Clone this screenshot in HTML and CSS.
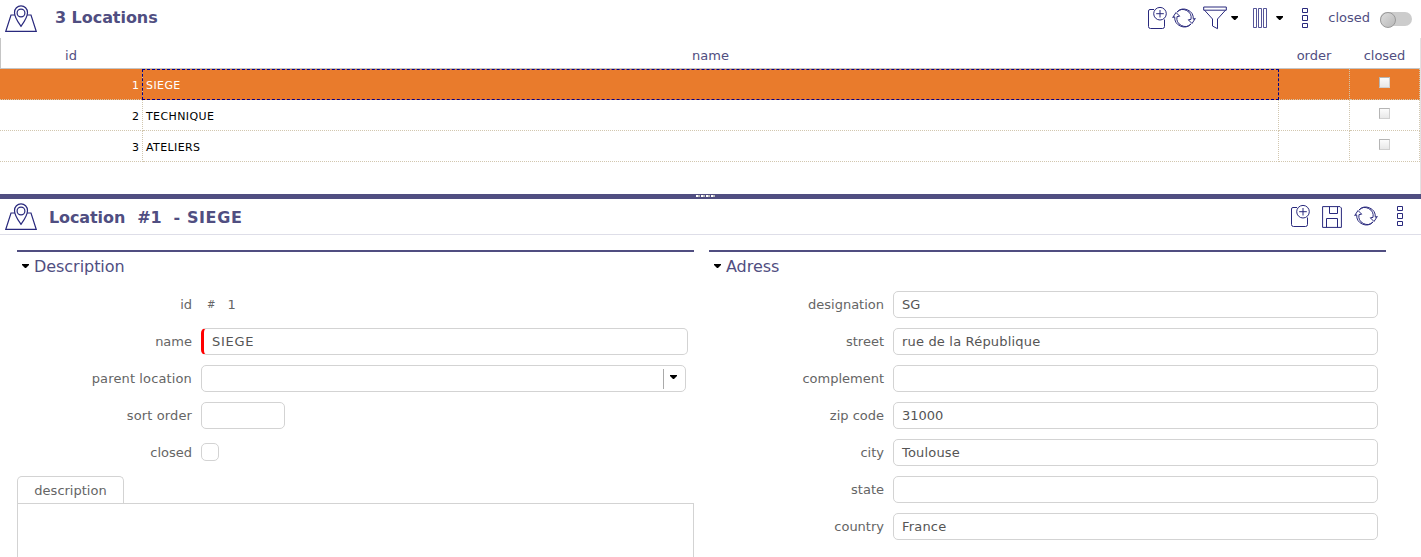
FILE: index.html
```html
<!DOCTYPE html>
<html lang="en">
<head>
<meta charset="utf-8">
<title>Locations</title>
<link rel="stylesheet" href="styles.css">
</head>
<body>
<svg class="defs" width="0" height="0" aria-hidden="true">
  <symbol id="map" viewBox="0 0 32 28"><path d="M10 10H6L.8 26.3H31.2L26 10H22"/><path d="M16 21.300C13 17 9.500 12.500 9.500 7.500A6.500 6.700 0 0 1 22.500 7.500C22.500 12.500 19 17 16 21.300Z"/><circle cx="16" cy="8" r="3.900"/></symbol>
  <symbol id="add" viewBox="0 0 20 24"><path d="M7 3.500H3Q1.500 3.500 1.500 5V20.500Q1.500 22.500 3.500 22.500H15.500Q17.500 22.500 17.500 20.500V13.500"/><circle cx="13" cy="7.700" r="6.300"/><path d="M13 4V11.500M9.200 7.700H16.800"/></symbol>
  <symbol id="refresh" viewBox="0 0 24 22"><path d="M5 5A9.500 9.500 0 0 1 21.300 12.200L23.300 11.500L20 16.500L16.300 12.800L19 12.400A8.300 8.300 0 0 0 5 5Z"/><path d="M19 17A9.500 9.500 0 0 1 2.700 9.800L.7 10.500L4 5.500L7.700 9.200L5 9.600A8.300 8.300 0 0 0 19 17Z"/></symbol>
  <symbol id="filter" viewBox="0 0 24 24"><path d="M.7 1H23.300V4.200H.7ZM1.500 4.200L9.500 13V20L14.500 22.700V13L22.500 4.200"/></symbol>
  <symbol id="columns" viewBox="0 0 16 22"><path d="M1.500 1.500H4.500V20.500H1.500ZM6.500 1.500H9.500V20.500H6.500ZM11.500 1.500H14.500V20.500H11.500Z"/></symbol>
  <symbol id="dots" viewBox="0 0 6 21"><path d="M.5 .5H5.500V4.500H.5ZM.5 7.500H5.500V12.500H.5ZM.5 15.500H5.500V19.500H.5Z"/></symbol>
  <symbol id="save" viewBox="0 0 20 22"><path d="M.6 .6H18L19.400 2V21.400H.6ZM7.500 .6V7.500H15.500V.6M4.500 21.400V12.500H15.500V21.400"/></symbol>
</svg>

<section class="list">
  <header class="bar">
    <svg class="icon map"><use href="#map"/></svg>
    <h1 class="list-title">3 Locations</h1>
    <div class="tools">
      <svg class="icon add"><use href="#add"/></svg>
      <svg class="icon refresh"><use href="#refresh"/></svg>
      <svg class="icon filter"><use href="#filter"/></svg>
      <i class="caret"></i>
      <svg class="icon columns"><use href="#columns"/></svg>
      <i class="caret"></i>
      <svg class="icon dots"><use href="#dots"/></svg>
      <span class="switch-label">closed</span>
      <span class="switch"></span>
    </div>
  </header>
  <div class="grid">
    <div class="row head"><span>id</span><span>name</span><span>order</span><span>closed</span></div>
    <div class="row selected"><span class="num">1</span><span class="name">SIEGE</span><span></span><span><i class="check"></i></span></div>
    <div class="row"><span class="num">2</span><span class="name">TECHNIQUE</span><span></span><span><i class="check"></i></span></div>
    <div class="row"><span class="num">3</span><span class="name">ATELIERS</span><span></span><span><i class="check"></i></span></div>
  </div>
</section>

<div class="splitter"><i></i><i></i><i></i><i></i></div>

<section class="detail">
  <header class="bar detail-bar">
    <svg class="icon map"><use href="#map"/></svg>
    <h2 class="detail-title"><span>Location</span><span>#1</span><span class="detail-name">- SIEGE</span></h2>
    <div class="tools detail-tools">
      <svg class="icon add"><use href="#add"/></svg>
      <svg class="icon save"><use href="#save"/></svg>
      <svg class="icon refresh"><use href="#refresh"/></svg>
      <svg class="icon dots"><use href="#dots"/></svg>
    </div>
  </header>
  <div class="panes">
    <div class="pane">
      <h3><i class="caret"></i>Description</h3>
      <div class="fields">
        <div class="field"><label>id</label><span class="hash">#</span><span class="idnum">1</span></div>
        <div class="field"><label>name</label><div class="input required caps">SIEGE</div></div>
        <div class="field"><label class="spaced">parent location</label><div class="input select"><i class="caret"></i></div></div>
        <div class="field"><label class="spaced">sort order</label><div class="input short"></div></div>
        <div class="field"><label>closed</label><div class="box"></div></div>
      </div>
      <div class="tab">description</div>
      <div class="editor"></div>
    </div>
    <div class="pane">
      <h3><i class="caret"></i>Adress</h3>
      <div class="fields">
        <div class="field"><label>designation</label><div class="input">SG</div></div>
        <div class="field"><label>street</label><div class="input spaced">rue de la République</div></div>
        <div class="field"><label>complement</label><div class="input"></div></div>
        <div class="field"><label>zip code</label><div class="input">31000</div></div>
        <div class="field"><label>city</label><div class="input spaced">Toulouse</div></div>
        <div class="field"><label>state</label><div class="input"></div></div>
        <div class="field"><label>country</label><div class="input spaced">France</div></div>
      </div>
    </div>
  </div>
</section>
</body>
</html>
```
FILE: styles.css
```css
* { box-sizing: border-box; }
body {
  margin: 0;
  height: 557px;
  overflow: hidden;
  display: flex;
  flex-direction: column;
  background: #fff;
  color: #656565;
  font: 13px/16px Verdana, "DejaVu Sans", sans-serif;
}
h1, h2, h3 { margin: 0; }
.defs { position: absolute; }
.icon { fill: none; stroke: #29297d; stroke-width: 1; flex: none; }
.map { width: 32px; height: 28px; stroke-width: 1.2; margin-top: 1px; }
.add { width: 20px; height: 24px; }
.refresh { width: 24px; height: 22px; }
.filter { width: 24px; height: 24px; }
.columns { width: 16px; height: 22px; stroke-width: .8; }
.dots { width: 6px; height: 21px; stroke-width: 1; }
.save { width: 20px; height: 22px; }
.caret { width: 7px; height: 4px; background: #000; clip-path: polygon(0 0, 100% 0, 100% 25%, 57% 100%, 43% 100%, 0 25%); flex: none; }

.list { height: 194px; flex: none; }
.bar { height: 38px; display: flex; align-items: center; padding: 0 9px 1px 5px; color: #504e81; }
.list-title, .detail-title { font-size: 16px; line-height: 20px; font-weight: bold; white-space: nowrap; }
.list-title { margin-left: 18px; margin-top: -2px; letter-spacing: -.05px; }
.tools { display: flex; align-items: center; margin-left: auto; }
.list .tools { margin-top: -1px; }
.list .add { margin-right: -1px; }
.list .refresh { margin-left: 6px; }
.list .filter { margin-left: 7px; }
.list .filter + .caret { margin-left: 4px; }
.list .columns { margin-left: 14px; }
.list .columns + .caret { margin-left: 8px; }
.list .dots { margin-left: 19px; margin-top: 1px; }
.switch-label { margin-left: 20px; }
.switch { width: 32px; height: 14px; margin-left: 10px; margin-top: 1px; border-radius: 7px; background: #ccc; }
.switch::before { content: ""; display: block; width: 14px; height: 14px; border: 1px solid #999; border-radius: 50%; background: linear-gradient(135deg, #ddd, #b8b8b8); }

.grid { height: 156px; border-right: 1px solid #e2e2e2; }
.row { display: grid; grid-template-columns: 143px 1136px 71px 70px; height: 31px; font-size: 11px; color: #000; }
.row span { display: flex; align-items: center; justify-content: center; border-right: 1px dotted #d2c7af; border-bottom: 1px dotted #d2c7af; }
.row .num { justify-content: flex-end; padding: 3px 3px 0 0; }
.row .name { justify-content: flex-start; padding: 3px 0 0 3px; letter-spacing: .4px; }
.row.head { font-size: 13px; color: #504e81; }
.row.head span { border-right: 0; border-bottom: 1px solid #c5c5c5; padding: 5px 1px 0 0; }
.row.head span:first-child { border-left: 1px solid #c5c5c5; padding-right: 2px; }
.row.selected { background: #e97b2c; color: #fff; }
.selected .name { border: 1px dashed #00008b; margin-left: -1px; padding-top: 2px; }
.check { width: 11px; height: 11px; margin-bottom: 3px; border: 1px solid #b5b5b5; border-right-color: #d0d0d0; border-bottom-color: #d0d0d0; background: linear-gradient(#fcfcfc, #e8e8e8); }

.splitter { height: 5px; flex: none; display: flex; justify-content: center; gap: 1px; padding: 1px 10px 0 0; background: #504e81; }
.splitter i { width: 4px; height: 2px; background: linear-gradient(90deg, #fff 50%, #bbb 50%); }

.detail { flex: 1; min-height: 0; }
.detail-bar { height: 36px; border-bottom: 1px solid #dedee8; padding: 0 18px 0 5px; }
.detail-title { margin-left: 12px; margin-top: 2px; display: flex; gap: 12px; letter-spacing: -.1px; }
.detail-name { letter-spacing: .6px; }
.detail-tools { margin-top: -1px; }
.detail-tools .save { margin-left: 12px; margin-top: 1px; }
.detail-tools .refresh { margin-left: 12px; }
.detail-tools .dots { margin-left: 19px; margin-top: 1px; }
.panes { display: grid; grid-template-columns: 677px 677px; gap: 15px; padding: 15px 17px 0; }
.pane { border-top: 2px solid #504e81; height: 307px; }
.pane h3 { display: flex; align-items: center; gap: 5px; height: 29px; padding: 1px 0 0 5px; color: #504e81; font-size: 16px; font-weight: normal; letter-spacing: -.05px; }
.pane h3 .caret { margin-top: -2px; }
.fields { display: flex; flex-direction: column; gap: 10px; padding-top: 10px; }
.field { display: flex; align-items: center; height: 27px; }
.field label { width: 175px; margin-right: 9px; text-align: right; white-space: nowrap; }
.input { width: 485px; height: 27px; padding: 0 8px; border: 1px solid #d3d3d3; border-radius: 5px; line-height: 25px; color: #555; }
.spaced { letter-spacing: .18px; }
.field label.spaced { letter-spacing: .13px; }
.caps { letter-spacing: .7px; }
.required { width: 487px; border-left: 3px solid #f00; }
.select { display: flex; align-items: center; justify-content: flex-end; }
.select::before { content: ""; width: 1px; height: 20px; margin-right: 6px; background: #aaa; }
.select .caret { margin-top: -3px; }
.short { width: 84px; }
.box { width: 18px; height: 18px; margin-top: -1px; border: 1px solid #d3d3d3; border-radius: 5px; }
.hash { margin-left: 6px; font-size: 10px; }
.idnum { margin-left: 12px; }
.tab { width: 107px; height: 27px; margin-top: 10px; border: 1px solid #d3d3d3; border-bottom: 0; border-radius: 5px 5px 0 0; text-align: center; line-height: 28px; }
.editor { height: 60px; border: 1px solid #d3d3d3; }
```
